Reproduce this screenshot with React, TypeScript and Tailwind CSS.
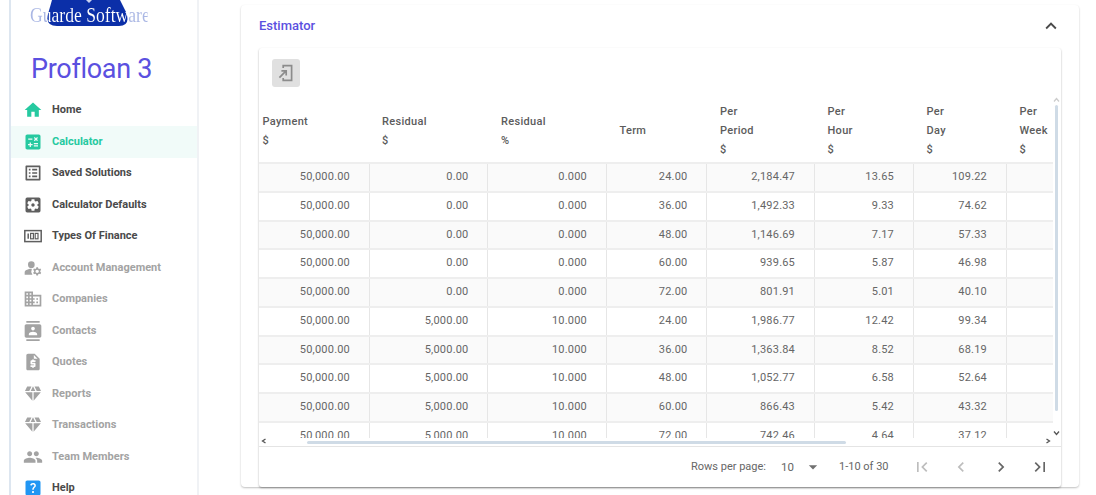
import {
  MdHome,
  MdCalculate,
  MdOutlineListAlt,
  MdSettingsApplications,
  MdManageAccounts,
  MdOutlineDomain,
  MdContacts,
  MdRequestQuote,
  MdDiamond,
  MdPeople,
  MdHelpCenter,
  MdKeyboardArrowUp,
  MdFirstPage,
  MdLastPage,
  MdChevronLeft,
  MdChevronRight,
  MdArrowDropDown,
} from "react-icons/md";

function FinanceIcon({ className }: { className?: string }) {
  return (
    <svg className={className} viewBox="0 0 20 20" fill="none" stroke="currentColor">
      <rect x="1.8" y="4.6" width="16.4" height="11" strokeWidth="1.5" />
      <path d="M5.2 7.4 V12.8" strokeWidth="1.5" />
      <rect x="7.6" y="7.4" width="2.8" height="5.4" strokeWidth="1.2" />
      <rect x="12.2" y="7.4" width="2.8" height="5.4" strokeWidth="1.2" />
    </svg>
  );
}

function ExportIcon({ className }: { className?: string }) {
  return (
    <svg className={className} viewBox="0 0 20 20" fill="none" stroke="currentColor" strokeWidth="1.7">
      <path d="M7.2 5 V2.6 H15.6 V17.4 H7.2 V15" />
      <path d="M3.4 14.6 L9.8 8.2 M5.4 7.8 H10.2 V12.6" />
    </svg>
  );
}

const navItems = [
  { label: "Home", icon: MdHome, tone: "dark", iconClass: "text-[#26c9a0]" },
  { label: "Calculator", icon: MdCalculate, tone: "active", iconClass: "text-[#26c9a0]" },
  { label: "Saved Solutions", icon: MdOutlineListAlt, tone: "dark", iconClass: "text-[#5f5f5f]" },
  { label: "Calculator Defaults", icon: MdSettingsApplications, tone: "dark", iconClass: "text-[#5f5f5f]" },
  { label: "Types Of Finance", icon: FinanceIcon, tone: "dark", iconClass: "text-[#5f5f5f]" },
  { label: "Account Management", icon: MdManageAccounts, tone: "muted", iconClass: "text-[#a3a3a3]" },
  { label: "Companies", icon: MdOutlineDomain, tone: "muted", iconClass: "text-[#a3a3a3]" },
  { label: "Contacts", icon: MdContacts, tone: "muted", iconClass: "text-[#a3a3a3]" },
  { label: "Quotes", icon: MdRequestQuote, tone: "muted", iconClass: "text-[#a3a3a3]" },
  { label: "Reports", icon: MdDiamond, tone: "muted", iconClass: "text-[#a3a3a3]" },
  { label: "Transactions", icon: MdDiamond, tone: "muted", iconClass: "text-[#a3a3a3]" },
  { label: "Team Members", icon: MdPeople, tone: "muted", iconClass: "text-[#a3a3a3]" },
  { label: "Help", icon: MdHelpCenter, tone: "dark", iconClass: "text-[#2196f3]" },
];

const rows = [
  ["50,000.00", "0.00", "0.000", "24.00", "2,184.47", "13.65", "109.22"],
  ["50,000.00", "0.00", "0.000", "36.00", "1,492.33", "9.33", "74.62"],
  ["50,000.00", "0.00", "0.000", "48.00", "1,146.69", "7.17", "57.33"],
  ["50,000.00", "0.00", "0.000", "60.00", "939.65", "5.87", "46.98"],
  ["50,000.00", "0.00", "0.000", "72.00", "801.91", "5.01", "40.10"],
  ["50,000.00", "5,000.00", "10.000", "24.00", "1,986.77", "12.42", "99.34"],
  ["50,000.00", "5,000.00", "10.000", "36.00", "1,363.84", "8.52", "68.19"],
  ["50,000.00", "5,000.00", "10.000", "48.00", "1,052.77", "6.58", "52.64"],
  ["50,000.00", "5,000.00", "10.000", "60.00", "866.43", "5.42", "43.32"],
  ["50,000.00", "5,000.00", "10.000", "72.00", "742.46", "4.64", "37.12"],
];

const headers = [
  { lines: ["Payment", "$"], pad: "pl-[3.5px]" },
  { lines: ["Residual", "$"], pad: "pl-[12.5px]" },
  { lines: ["Residual", "%"], pad: "pl-[13px]" },
  { lines: ["Term"], pad: "pl-[13px]" },
  { lines: ["Per", "Period", "$"], pad: "pl-[13px]" },
  { lines: ["Per", "Hour", "$"], pad: "pl-[13px]" },
  { lines: ["Per", "Day", "$"], pad: "pl-[13px]" },
  { lines: ["Per", "Week", "$"], pad: "pl-[13px]" },
];

const gridCols = "grid-cols-[110.5px_118.5px_118.5px_100.5px_107.5px_99px_93px_100px]";

function Sidebar() {
  return (
    <aside className="w-[199px] shrink-0 h-[495px] overflow-hidden bg-white">
      <div className="ml-[9px] h-full border-l-2 border-r-2 border-l-[#dde6f0] border-r-[#f0f2f5]">
        {/* Logo */}
        <div className="relative h-[26px] w-full overflow-hidden">
          <svg className="absolute left-[36px] top-0" width="82" height="26" viewBox="0 0 82 26">
            <path d="M5 0 H73 L79 12 Q84 26 72 26 H10 Q-2 26 1 14 Z" fill="#0b2fa8" />
            <path d="M39 0 H45 L42 3 Z" fill="#c9d2f0" />
          </svg>
          <div className="absolute left-[19px] top-[3px] w-[147px] origin-left scale-x-[0.8] whitespace-nowrap text-[22px] leading-[24px] font-['Liberation_Serif',serif] text-transparent bg-clip-text bg-[linear-gradient(90deg,#aab7e4_0%,#aab7e4_14.5%,#ffffff_14.5%,#ffffff_83%,#aab7e4_83%,#aab7e4_100%)]">
            Guarde Software
          </div>
        </div>
        <div className="pl-[20px] mt-[24px] h-[38px] text-[27px] leading-[38px] text-[#5b50e0] font-['Roboto',sans-serif] tracking-[-0.3px]">
          Profloan 3
        </div>
        <nav className="mt-[6.5px] font-['Roboto',sans-serif]">
          {navItems.map((item) => {
            const Icon = item.icon;
            return (
              <div
                key={item.label}
                className={
                  "flex items-center h-[31.5px] pl-[12px] " +
                  (item.tone === "active" ? "bg-[#f1fbf9]" : "")
                }
              >
                <span className="w-[29px] shrink-0">
                  <Icon className={"w-[20px] h-[20px] " + item.iconClass} />
                </span>
                <span
                  className={
                    "text-[11px] font-bold " +
                    (item.tone === "active"
                      ? "text-[#26c9a0]"
                      : item.tone === "muted"
                        ? "text-[#a3a3a3]"
                        : "text-[#4a4a4a]")
                  }
                >
                  {item.label}
                </span>
              </div>
            );
          })}
        </nav>
      </div>
    </aside>
  );
}

function EstimatorTable() {
  return (
    <div className="relative h-[439px] rounded-[3px] bg-white shadow-[0_1px_2px_rgba(0,0,0,0.35)] flex flex-col">
      {/* Toolbar */}
      <div className="h-[52px] shrink-0 pl-[13px] pt-[11px]">
        <button className="w-[28px] h-[28px] rounded-[3px] bg-[#e0e0e0] flex items-center justify-center">
          <ExportIcon className="w-[20px] h-[20px] text-[#8c8c8c]" />
        </button>
      </div>

      {/* Table */}
      <div className="w-[794px] h-[338px] overflow-hidden text-[11px] tracking-[0.2px] font-['Roboto',sans-serif]">
        <div className={"grid w-[847px] h-[64px] pb-[1px] border-b-2 border-[#eeeeee] " + gridCols}>
          {headers.map((h, i) => (
            <div key={i} className={"flex flex-col justify-center font-medium text-[#5c5c5c] tracking-[0.3px] " + h.pad}>
              {h.lines.map((line, j) => (
                <span key={j} className="leading-[19px]">
                  {line}
                </span>
              ))}
            </div>
          ))}
        </div>
        {rows.map((row, i) => (
          <div
            key={i}
            className={
              "grid w-[847px] h-[28.75px] border-b-2 border-[#eeeeee] " +
              gridCols +
              (i % 2 === 0 ? " bg-[#fafafa]" : " bg-white")
            }
          >
            {row.map((cell, j) => (
              <div
                key={j}
                className="flex items-center justify-end pr-[18.5px] border-r border-[#e6e6e6] text-[#666666]"
              >
                {cell}
              </div>
            ))}
            <div />
          </div>
        ))}
      </div>

      {/* Scrollbar area */}
      <div className="h-[8px] shrink-0" />

      {/* Pagination */}
      <div className="flex-1 flex items-center border-t border-[#e4e4e4] text-[11px] text-[#666666] font-['Roboto',sans-serif]">
        <span className="ml-[432px] w-[90px]">Rows per page:</span>
        <span className="text-[11.5px] w-[22px] pt-[2px]">10</span>
        <MdArrowDropDown className="w-[20px] h-[20px] text-[#707070]" />
        <span className="ml-[16px] w-[55px]">1-10 of 30</span>
        <span className="ml-[18px] flex items-center gap-[19.3px]">
          <MdFirstPage className="w-[20px] h-[20px] text-[#bdbdbd]" />
          <MdChevronLeft className="w-[20px] h-[20px] text-[#bdbdbd]" />
          <MdChevronRight className="w-[20px] h-[20px] text-[#666666]" />
          <MdLastPage className="w-[20px] h-[20px] text-[#666666]" />
        </span>
      </div>

      {/* Scrollbars lie over the table */}
      <div className="absolute left-[48px] top-[393px] w-[539px] h-[3px] rounded-sm bg-[#cfdbe6]" />
      <div className="absolute left-[796px] top-[57px] w-[3px] h-[306px] rounded-sm bg-[#cfdbe6]" />
      <svg className="absolute left-[2px] top-[390px]" width="6" height="6" viewBox="0 0 6 6">
        <path d="M4.5 1 L1.5 3 L4.5 5" fill="none" stroke="#555" strokeWidth="1.3" />
      </svg>
      <svg className="absolute left-[786px] top-[390px]" width="6" height="6" viewBox="0 0 6 6">
        <path d="M1.5 1 L4.5 3 L1.5 5" fill="none" stroke="#555" strokeWidth="1.3" />
      </svg>
      <svg className="absolute left-[794px] top-[49px]" width="7" height="6" viewBox="0 0 7 6">
        <path d="M1 4.5 L3.5 1.5 L6 4.5" fill="none" stroke="#ccc" strokeWidth="1.3" />
      </svg>
      <svg className="absolute left-[794px] top-[382px]" width="7" height="6" viewBox="0 0 7 6">
        <path d="M1 1.5 L3.5 4.5 L6 1.5" fill="none" stroke="#555" strokeWidth="1.3" />
      </svg>
    </div>
  );
}

export default function App() {
  return (
    <div className="flex w-[1096px] h-[495px] overflow-hidden bg-white">
      <Sidebar />
      <main className="flex-1 pl-[42px] pt-[5px]">
        <div className="w-[838px] h-[482px] rounded-[4px] bg-white shadow-[0_1px_2px_rgba(0,0,0,0.25)] px-[18px]">
          <div className="h-[43px] pb-[2px] flex items-center justify-between">
            <span className="text-[13px] font-medium text-[#5b50e0] font-['Roboto',sans-serif]">Estimator</span>
            <MdKeyboardArrowUp className="w-[22px] h-[22px] text-[#4a4a4a] -mr-[1px]" />
          </div>
          <EstimatorTable />
        </div>
      </main>
    </div>
  );
}
